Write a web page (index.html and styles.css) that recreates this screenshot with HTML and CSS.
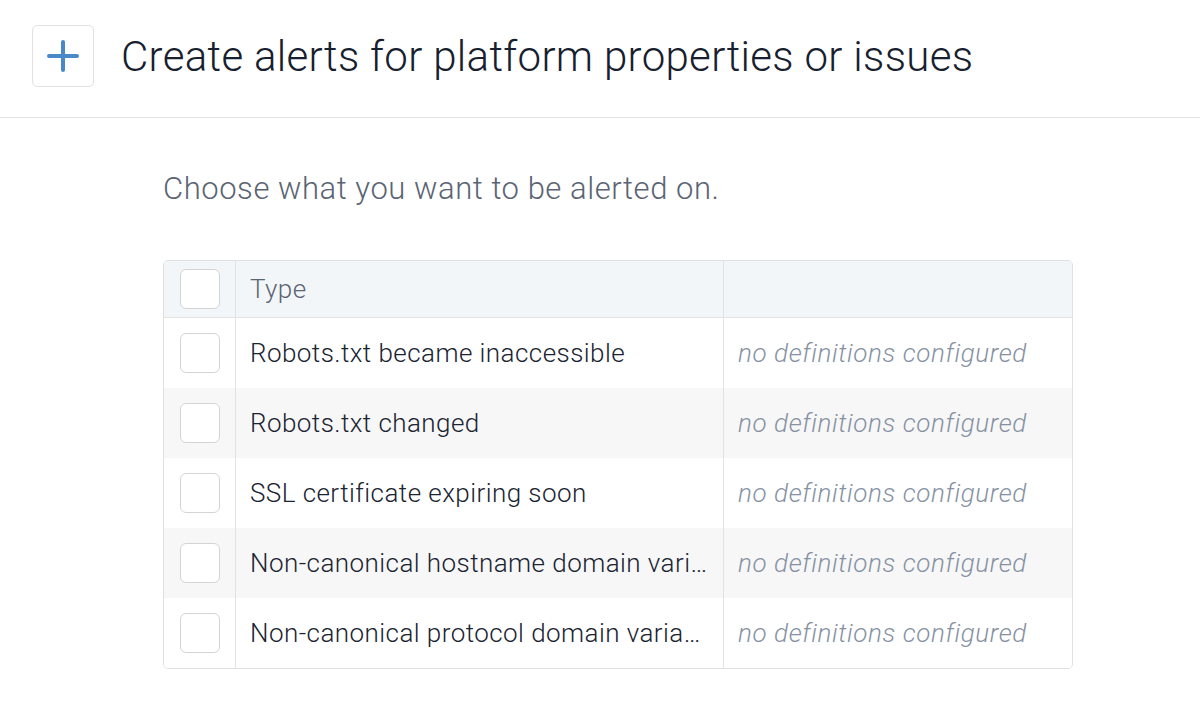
FILE: index.html
```html
<!DOCTYPE html>
<html>
<head>
<meta charset="utf-8">
<link rel="stylesheet" href="styles.css">
</head>
<body>
<header class="header">
  <button class="add-btn" aria-label="Add">
    <svg width="32" height="32" viewBox="0 0 32 32"><path d="M16 2V30M2 16H30" stroke="#4a89c8" stroke-width="4" stroke-linecap="round" fill="none"/></svg>
  </button>
  <h1 class="title">Create alerts for platform properties or issues</h1>
</header>
<main class="main">
  <p class="lead">Choose what you want to be alerted on.</p>
  <div class="table">
    <div class="row head">
      <div class="cell check"><span class="box"></span></div>
      <div class="cell type">Type</div>
      <div class="cell def"></div>
    </div>
    <div class="row">
      <div class="cell check"><span class="box"></span></div>
      <div class="cell type">Robots.txt became inaccessible</div>
      <div class="cell def">no definitions configured</div>
    </div>
    <div class="row alt">
      <div class="cell check"><span class="box"></span></div>
      <div class="cell type">Robots.txt changed</div>
      <div class="cell def">no definitions configured</div>
    </div>
    <div class="row">
      <div class="cell check"><span class="box"></span></div>
      <div class="cell type">SSL certificate expiring soon</div>
      <div class="cell def">no definitions configured</div>
    </div>
    <div class="row alt">
      <div class="cell check"><span class="box"></span></div>
      <div class="cell type" title="Non-canonical hostname domain variant found">Non-canonical hostname domain vari…</div>
      <div class="cell def">no definitions configured</div>
    </div>
    <div class="row">
      <div class="cell check"><span class="box"></span></div>
      <div class="cell type" title="Non-canonical protocol domain variant found">Non-canonical protocol domain varia…</div>
      <div class="cell def">no definitions configured</div>
    </div>
  </div>
</main>
</body>
</html>
```
FILE: styles.css
```css
html, body {
  margin: 0;
  padding: 0;
  background: #fff;
  font-family: Roboto, "Liberation Sans", sans-serif;
  font-weight: 300;
  color: #1c2533;
}
.header {
  display: flex;
  align-items: center;
  height: 117px;
  padding: 0 0 0 32px;
  border-bottom: 1px solid #e3e3e3;
  gap: 27px;
}
.add-btn {
  width: 62px;
  height: 62px;
  margin-top: -6px;
  border: 1px solid #e1e1e1;
  border-radius: 5px;
  background: #fff;
  display: flex;
  align-items: center;
  justify-content: center;
  padding: 0;
}
.title {
  margin: -4px 0 0;
  font-size: 42px;
  font-weight: 300;
  color: #17202e;
  letter-spacing: 0.32px;
}
.main {
  padding: 0 0 0 163px;
}
.lead {
  margin: 52px 0 0;
  height: 90px;
  font-size: 31px;
  color: #5a6474;
  letter-spacing: 0.55px;
}
.table {
  width: 908px;
  border: 1px solid #e0e0e0;
  border-radius: 5px;
  overflow: hidden;
}
.row {
  display: grid;
  grid-template-columns: 72px 488px 1fr;
  height: 70px;
  background: #fff;
}
.row.head {
  height: 57px;
  box-sizing: border-box;
  background: #f3f6f9;
  border-bottom: 1px solid #e2e4e6;
}
.row.alt {
  background: #f7f7f7;
}
.cell {
  display: flex;
  align-items: center;
  min-width: 0;
}
.check {
  justify-content: center;
  border-right: 1px solid #e2e2e2;
}
.type {
  padding: 0 14px;
  border-right: 1px solid #e2e2e2;
  font-size: 26px;
  letter-spacing: 0.44px;
  color: #1a2432;
  white-space: nowrap;
  overflow: hidden;
  display: block;
  line-height: 70px;
}
.head .type {
  line-height: 56px;
  color: #5a6474;
}
.def {
  padding: 0 14px;
  font-size: 26px;
  letter-spacing: 0.6px;
  font-style: italic;
  color: #8692a4;
}
.box {
  width: 38px;
  height: 38px;
  border: 1px solid #d4d4d4;
  border-radius: 6px;
  background: #fff;
}
```
